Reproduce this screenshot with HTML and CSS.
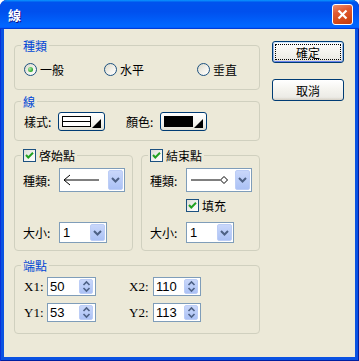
FILE: index.html
```html
<!DOCTYPE html>
<html lang="zh-Hant">
<head>
    <meta charset="UTF-8">
    <title>線</title>
    <link rel="stylesheet" href="styles.css">
</head>
<body>
    <div class="window">
        <div class="titlebar">
            <span class="title">線</span>
            <button class="close" aria-label="關閉">
                <svg width="11" height="11" viewBox="0 0 11 11"><path d="M1.5 1.5 L9.5 9.5 M9.5 1.5 L1.5 9.5" stroke="#fff" stroke-width="2.2"/></svg>
            </button>
        </div>

        <div class="client">
            <div class="main">
                <!-- 種類 -->
                <div class="group">
                    <div class="group-title">種類</div>
                    <div class="radio-row">
                        <label class="radio"><span class="radio-mark"><span class="dot"></span></span>一般</label>
                        <label class="radio"><span class="radio-mark"></span>水平</label>
                        <label class="radio"><span class="radio-mark"></span>垂直</label>
                    </div>
                </div>

                <!-- 線 -->
                <div class="group line-group">
                    <div class="group-title">線</div>
                    <div class="style-row">
                        <span class="lbl">樣式:</span>
                        <span class="pick"><span class="swatch line-swatch"></span><span class="tri"></span></span>
                        <span class="lbl second">顏色:</span>
                        <span class="pick"><span class="swatch color-swatch"></span><span class="tri"></span></span>
                    </div>
                </div>

                <div class="ends">
                    <div class="group end">
                        <div class="group-title">
                            <span class="check"><svg width="11" height="11" viewBox="0 0 11 11"><path d="M2 5 L4.3 7.5 L9 2.8" stroke="#21A121" stroke-width="2" fill="none"/></svg></span>啓始點
                        </div>
                        <div class="field">
                            <span class="lbl wide">種類:</span>
                            <span class="combo type-combo">
                                <span class="preview">
                                    <svg width="40" height="14" viewBox="0 0 40 14"><path d="M1 7 H36 M1 7 L7 2 M1 7 L7 12" stroke="#000" fill="none"/></svg>
                                </span>
                                <span class="drop"><svg width="9" height="6" viewBox="0 0 9 6"><path d="M1 1 L4.5 4.5 L8 1" stroke="#4D6185" stroke-width="2" fill="none"/></svg></span>
                            </span>
                        </div>
                        <div class="field size-field">
                            <span class="lbl wide">大小:</span>
                            <span class="combo size-combo">
                                <span class="value">1</span>
                                <span class="drop"><svg width="9" height="6" viewBox="0 0 9 6"><path d="M1 1 L4.5 4.5 L8 1" stroke="#4D6185" stroke-width="2" fill="none"/></svg></span>
                            </span>
                        </div>
                    </div>

                    <div class="group end">
                        <div class="group-title">
                            <span class="check"><svg width="11" height="11" viewBox="0 0 11 11"><path d="M2 5 L4.3 7.5 L9 2.8" stroke="#21A121" stroke-width="2" fill="none"/></svg></span>結束點
                        </div>
                        <div class="field">
                            <span class="lbl wide">種類:</span>
                            <span class="combo type-combo">
                                <span class="preview">
                                    <svg width="40" height="14" viewBox="0 0 40 14"><path d="M1 7 H30" stroke="#000"/><path d="M30.5 7 L34 3.5 L37.5 7 L34 10.5 Z" stroke="#000" fill="#fff"/></svg>
                                </span>
                                <span class="drop"><svg width="9" height="6" viewBox="0 0 9 6"><path d="M1 1 L4.5 4.5 L8 1" stroke="#4D6185" stroke-width="2" fill="none"/></svg></span>
                            </span>
                        </div>
                        <label class="fill-row">
                            <span class="check"><svg width="11" height="11" viewBox="0 0 11 11"><path d="M2 5 L4.3 7.5 L9 2.8" stroke="#21A121" stroke-width="2" fill="none"/></svg></span>填充
                        </label>
                        <div class="field fill-size">
                            <span class="lbl wide">大小:</span>
                            <span class="combo size-combo">
                                <span class="value">1</span>
                                <span class="drop"><svg width="9" height="6" viewBox="0 0 9 6"><path d="M1 1 L4.5 4.5 L8 1" stroke="#4D6185" stroke-width="2" fill="none"/></svg></span>
                            </span>
                        </div>
                    </div>
                </div>

                <!-- 端點 -->
                <div class="group points">
                    <div class="group-title">端點</div>
                    <div class="pt-row">
                        <span class="pt-lbl">X1:</span>
                        <span class="spin"><span class="value">50</span><span class="spin-btn"><svg width="9" height="13" viewBox="0 0 9 13"><path d="M1.5 5 L4.5 2 L7.5 5 M1.5 8 L4.5 11 L7.5 8" stroke="#4D6185" stroke-width="1.6" fill="none"/></svg></span></span>
                        <span class="pt-lbl right">X2:</span>
                        <span class="spin narrow"><span class="value">110</span><span class="spin-btn"><svg width="9" height="13" viewBox="0 0 9 13"><path d="M1.5 5 L4.5 2 L7.5 5 M1.5 8 L4.5 11 L7.5 8" stroke="#4D6185" stroke-width="1.6" fill="none"/></svg></span></span>
                    </div>
                    <div class="pt-row">
                        <span class="pt-lbl">Y1:</span>
                        <span class="spin"><span class="value">53</span><span class="spin-btn"><svg width="9" height="13" viewBox="0 0 9 13"><path d="M1.5 5 L4.5 2 L7.5 5 M1.5 8 L4.5 11 L7.5 8" stroke="#4D6185" stroke-width="1.6" fill="none"/></svg></span></span>
                        <span class="pt-lbl right">Y2:</span>
                        <span class="spin narrow"><span class="value">113</span><span class="spin-btn"><svg width="9" height="13" viewBox="0 0 9 13"><path d="M1.5 5 L4.5 2 L7.5 5 M1.5 8 L4.5 11 L7.5 8" stroke="#4D6185" stroke-width="1.6" fill="none"/></svg></span></span>
                    </div>
                </div>
            </div>

            <div class="actions">
                <button class="btn default">確定</button>
                <button class="btn">取消</button>
            </div>
        </div>
    </div>
</body>
</html>
```

FILE: styles.css
```css
* {
    box-sizing: border-box;
}

html, body {
    margin: 0;
    background: #fff;
}

body {
    font-family: "Noto Sans CJK TC", "Noto Sans", sans-serif;
    font-size: 12px;
    line-height: 15px;
    color: #000;
}

/* window frame */
.window {
    width: 359px;
    height: 361px;
    display: flex;
    flex-direction: column;
    background: #0A52E2;
    border-radius: 7px 7px 0 0;
    box-shadow: inset 1px 0 #0831D9, inset -1px 0 #001EA0, inset 0 -1px #001EA0;
    overflow: hidden;
}

.titlebar {
    height: 29px;
    flex: none;
    display: flex;
    align-items: center;
    padding: 0 6px 0 8px;
    border-radius: 7px 7px 0 0;
    background: linear-gradient(180deg, #0997ff, #0053ee 8%, #0050ee 40%, #06f 88%, #06f 93%, #005bff 95%, #003dd7 96%, #003dd7);
}

.title {
    color: #fff;
    font-weight: bold;
    font-size: 13px;
    text-shadow: 1px 1px #0F1089;
}

.close {
    margin-left: auto;
    width: 21px;
    height: 21px;
    padding: 0;
    display: flex;
    align-items: center;
    justify-content: center;
    border: 1px solid #fff;
    border-radius: 3px;
    background: linear-gradient(160deg, #EE8F6F 0%, #E25A32 35%, #D14716 75%, #C0390C 100%);
}

.client {
    flex: 1;
    margin: 0 4px 4px;
    background: #ECE9D8;
    display: flex;
    align-items: flex-start;
    padding: 12px 0 0 10px;
}

.main {
    width: 246px;
    margin-top: 4px;
}

/* group boxes */
.group {
    border: 1px solid #D0D0BF;
    border-radius: 4px;
}

.group-title {
    display: flex;
    align-items: center;
    width: max-content;
    height: 15px;
    margin: -8px 0 0 6px;
    padding: 0 2px;
    background: #ECE9D8;
    color: #0046D5;
}

.radio-row {
    display: grid;
    grid-template-columns: 80px 93px auto;
    height: 15px;
    margin: 9px 0 0;
    padding: 0 0 12px 9px;
    box-sizing: content-box;
}

.radio {
    display: flex;
    align-items: center;
    gap: 3px;
}

.radio-mark {
    width: 13px;
    height: 13px;
    border-radius: 50%;
    border: 1px solid #1C5180;
    background: linear-gradient(135deg, #DCD9C8 0%, #F4F3EE 60%, #fff 100%);
    display: flex;
    align-items: center;
    justify-content: center;
}

.dot {
    width: 5px;
    height: 5px;
    border-radius: 50%;
    background: radial-gradient(circle at 35% 35%, #A9EAA9, #21A121 75%);
}

.line-group {
    margin-top: 11px;
}

.style-row {
    display: flex;
    align-items: center;
    margin-top: 3px;
    padding: 0 0 9px 9px;
}

.lbl {
    width: 34px;
    flex: none;
}

.lbl.second {
    margin-left: 21px;
}

.pick {
    width: 47px;
    height: 19px;
    display: flex;
    align-items: center;
    padding: 0 3px;
    border: 1px solid #003C74;
    border-radius: 3px;
    background: linear-gradient(180deg, #fff 0%, #F4F3EE 60%, #E3E0D4 100%);
}

.swatch {
    width: 29px;
    height: 11px;
    border: 1px solid #000;
}

.line-swatch {
    background: linear-gradient(#fff 4px, #000 4px, #000 5px, #fff 5px);
}

.color-swatch {
    background: #000;
}

.tri {
    width: 0;
    height: 0;
    margin-left: auto;
    align-self: flex-end;
    margin-bottom: 2px;
    border-left: 9px solid transparent;
    border-bottom: 9px solid #000;
}

/* start / end point groups */
.ends {
    display: flex;
    gap: 8px;
    margin-top: 14px;
}

.end {
    width: 119px;
    padding: 0 0 7px 8px;
}

.check {
    width: 13px;
    height: 13px;
    margin-right: 3px;
    display: flex;
    align-items: center;
    justify-content: center;
    border: 1px solid #1C5180;
    background: linear-gradient(135deg, #DCDCD7 0%, #F4F4F1 60%, #fff 100%);
}

.end .group-title {
    margin-left: -2px;
    color: #000;
}

.field {
    display: flex;
    align-items: center;
    margin-top: 5px;
}

.size-field {
    margin-top: 30px;
}

.fill-size {
    margin-top: 10px;
}

.lbl.wide {
    width: 36px;
}

.combo {
    display: flex;
    border: 1px solid #7F9DB9;
    background: #fff;
    padding: 1px;
}

.type-combo {
    width: 66px;
    height: 24px;
}

.size-combo {
    width: 48px;
    height: 21px;
}

.preview {
    flex: 1;
    display: flex;
    align-items: center;
    padding-left: 2px;
}

.combo .value {
    flex: 1;
    padding-left: 2px;
    display: flex;
    align-items: center;
    font-family: "Liberation Sans", sans-serif;
    font-size: 13px;
}

.drop {
    width: 15px;
    display: flex;
    align-items: center;
    justify-content: center;
    border: 1px solid #BCCDF6;
    border-radius: 2px;
    background: linear-gradient(180deg, #C9D7FA 0%, #B7CAF7 60%, #ABC1F5 100%);
}

.fill-row {
    display: flex;
    align-items: center;
    height: 13px;
    margin: 7px 0 0 36px;
}

/* endpoints */
.points {
    margin-top: 14px;
    padding: 0 0 11px 9px;
}

.points .group-title {
    margin-left: -3px;
}

.pt-row {
    display: flex;
    align-items: center;
    margin-top: 7px;
}

.pt-row:nth-child(2) {
    margin-top: 4px;
}

.pt-lbl {
    width: 23px;
    font-family: "Liberation Serif", serif;
    font-size: 13px;
}

.pt-lbl.right {
    width: 24px;
    margin-left: 33px;
}

.spin {
    width: 49px;
    height: 19px;
    display: flex;
    border: 1px solid #7F9DB9;
    background: #fff;
    padding: 1px 2px 1px 0;
}

.spin.narrow {
    width: 48px;
}

.spin .value {
    flex: 1;
    padding-left: 2px;
    display: flex;
    align-items: center;
    font-family: "Liberation Sans", sans-serif;
    font-size: 13px;
}

.spin-btn {
    width: 14px;
    display: flex;
    align-items: center;
    justify-content: center;
    border: 1px solid #BCCDF6;
    border-radius: 2px;
    background: linear-gradient(180deg, #C9D7FA 0%, #B7CAF7 60%, #ABC1F5 100%);
}

/* dialog buttons */
.actions {
    display: flex;
    flex-direction: column;
    gap: 16px;
    margin-left: 12px;
}

.btn {
    width: 72px;
    height: 22px;
    padding: 0;
    font: inherit;
    color: #000;
    border: 1px solid #003C74;
    border-radius: 3px;
    background: linear-gradient(180deg, #fff 0%, #F4F3EE 50%, #ECEBE6 86%, #D6D0C5 100%);
}

.btn.default {
    box-shadow: inset 0 1px #CEE7FF, inset 1px 0 #98B8EA, inset -1px 0 #98B8EA, inset 0 -1px #6982EE;
    outline: 1px dotted #000;
    outline-offset: -4px;
}
```
